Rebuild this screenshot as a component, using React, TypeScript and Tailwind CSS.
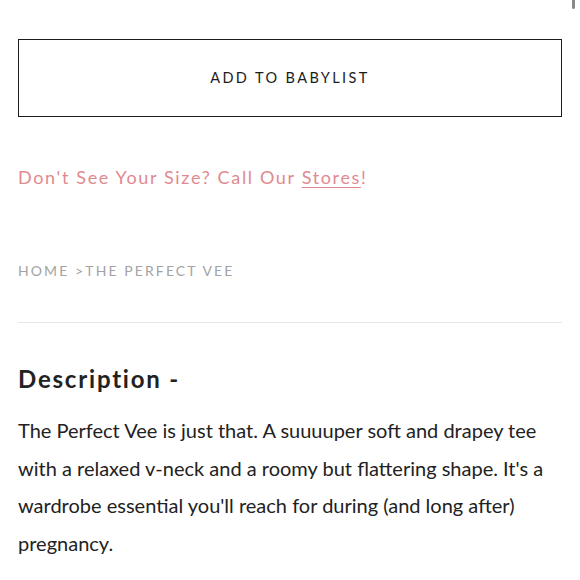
export default function App() {
  return (
    <div className="relative h-[580px] w-[580px] overflow-hidden bg-white font-['Lato',sans-serif]">
      <div className="absolute right-[5px] top-0 h-[9px] w-[3px] rounded-b-sm bg-[#8a8a8a]" />
      <div className="px-[18px] pt-[39px]">
        <button className="flex h-[78px] w-full items-center justify-center border-[1.5px] border-[#1c1c1c] text-[14.5px] tracking-[2.4px] text-[#1c1c1c]">
          ADD TO BABYLIST
        </button>
        <p className="mt-[47px] text-[18px] tracking-[1.65px] text-[#e08a8f]">
          Don't See Your Size? Call Our <span className="underline underline-offset-[3px]">Stores</span>!
        </p>
        <p className="mt-[69px] text-[14px] tracking-[2.1px] text-[#a3a3a3]">HOME &gt;THE PERFECT VEE</p>
        <div className="mt-[41px] h-px w-full bg-[#e6e6e6]" />
        <h2 className="mt-[38px] text-[24px] font-bold tracking-[1.8px] text-[#222]">Description -</h2>
        <p className="mt-[15px] max-w-[540px] text-[20px] leading-[37.5px] text-[#222]">
          The Perfect Vee is just that. A suuuuper soft and drapey tee with a relaxed v-neck and a roomy but flattering shape. It's a wardrobe essential you'll reach for during (and long after) pregnancy.
        </p>
      </div>
    </div>
  );
}
